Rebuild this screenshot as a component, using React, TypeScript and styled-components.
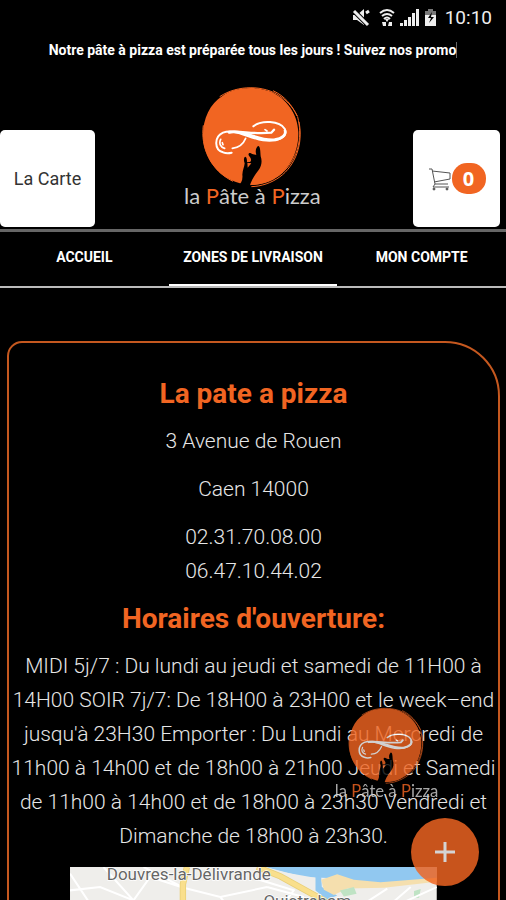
import React from "react";
import styled, { createGlobalStyle } from "styled-components";

const ORANGE = "#f16522";

const GlobalStyle = createGlobalStyle`
  *, *::before, *::after { box-sizing: border-box; }
  body {
    margin: 0;
    background: #000;
    color: #e6e6e6;
    font-family: Roboto, "Liberation Sans", sans-serif;
  }
  h2, p, nav { margin: 0; }
  button { font: inherit; border: 0; cursor: pointer; }
`;

const Screen = styled.div`
  display: flex;
  flex-direction: column;
  height: 100vh;
  overflow: hidden;
  background: #000;
`;

const StatusBar = styled.div`
  display: flex;
  align-items: center;
  justify-content: flex-end;
  gap: 4px;
  height: 36px;
  padding-right: 14px;
  color: #eee;
`;

const Clock = styled.time`
  font-size: 19px;
  line-height: 36px;
`;

const Ticker = styled.p`
  padding: 4px 0;
  text-align: center;
  font-size: 14px;
  font-weight: 700;
  line-height: 20px;
  color: #fff;
`;

const TickerText = styled.span`
  border-right: 1px solid #666;
`;

const Header = styled.header`
  display: grid;
  grid-template-columns: 1fr auto 1fr;
  align-items: end;
  padding-top: 18px;
`;

const HeaderButton = styled.button<{ $end?: boolean }>`
  display: flex;
  align-items: center;
  justify-content: center;
  justify-self: ${(p) => (p.$end ? "end" : "start")};
  width: ${(p) => (p.$end ? 87 : 95)}px;
  height: 97px;
  margin: 0 ${(p) => (p.$end ? 6 : 0)}px 2px 0;
  padding: 0;
  border-radius: 5px;
  background: #fff;
  color: #333;
  font-size: 18px;
`;

const Badge = styled.span`
  width: 34px;
  border-radius: 15px;
  background: ${ORANGE};
  color: #fff;
  font-family: "Open Sans", sans-serif;
  font-size: 20px;
  font-weight: 700;
  line-height: 31px;
  text-align: center;
`;

const LogoBox = styled.div`
  display: flex;
  width: 140px;
  margin-bottom: 17px;
`;

const Tabs = styled.nav`
  display: grid;
  grid-template-columns: repeat(3, 1fr);
  border-top: 3px solid #666;
  border-bottom: 2px solid #bbb;
`;

const Tab = styled.a<{ $active?: boolean }>`
  height: 54px;
  padding-top: 3px;
  border-bottom: 2px solid ${(p) => (p.$active ? "#fff" : "transparent")};
  color: #fff;
  font-size: 14px;
  font-weight: 700;
  line-height: 45px;
  text-align: center;
  text-decoration: none;
`;

const Content = styled.main`
  flex: 1;
  min-height: 0;
  overflow-y: auto;
  scrollbar-width: none;
  padding: 53px 6px 24px 7px;
`;

const Card = styled.section`
  display: flex;
  flex-direction: column;
  align-items: center;
  gap: 14px;
  padding: 34px 0 40px;
  border: 2px solid #c5581f;
  border-radius: 15px 55px 15px 15px;
  text-align: center;
`;

const Title = styled.h2`
  color: ${ORANGE};
  font-size: 28px;
  font-weight: 700;
  line-height: 33px;
`;

const Line = styled.p`
  font-size: 21px;
  font-weight: 300;
  line-height: 34px;
`;

const MapFrame = styled.figure`
  width: 75%;
  margin: 0;
`;

const FloatingLogo = styled.div`
  position: fixed;
  right: 66px;
  bottom: 94px;
  width: 106px;
  opacity: 0.82;
  pointer-events: none;
`;

const AddButton = styled.button`
  position: fixed;
  right: 27px;
  bottom: 14px;
  display: flex;
  align-items: center;
  justify-content: center;
  width: 68px;
  height: 68px;
  padding: 0;
  border-radius: 50%;
  background: ${ORANGE};
  color: #fff;
  opacity: 0.83;
`;

function Logo() {
  return (
    <svg viewBox="40 20 420 390" width="100%" role="img" aria-label="la Pâte à Pizza">
      <path d="M100 185C98 135 120 85 158 62C190 38 250 30 300 48C350 68 384 115 386 170C388 230 358 290 300 318C240 345 165 320 130 270C112 245 101 215 100 185Z" fill={ORANGE} />
      <g fill="none" stroke={ORANGE} strokeWidth="3">
        <path d="M150 64C205 27 285 30 330 62C358 80 374 104 384 124" />
        <path d="M310 46C345 62 368 90 382 122" />
        <path d="M388 140C401 205 378 270 330 305C305 323 275 333 245 334" />
        <path d="M384 125C398 180 388 235 352 278C322 314 280 326 240 328" />
        <path d="M101 150C92 215 122 285 190 318" />
      </g>
      <g fill="none" stroke="#fff" strokeLinecap="round">
        <path d="M251 153C275 133 330 136 345 160C356 185 325 201 280 195C235 188 195 158 160 172C132 185 134 224 160 231C168 234 178 234 186 232" strokeWidth="6" />
        <path d="M178 171C225 162 265 198 315 193C338 190 350 178 346 166" strokeWidth="8" />
        <path d="M178 170C215 165 245 178 305 172L313 163" strokeWidth="7" />
        <path d="M228 189C220 208 207 217 188 219" strokeWidth="5" />
        <path d="M153 192C147 205 153 216 165 219M158 202L160 208M286 163L292 167" strokeWidth="5" />
      </g>
      <path d="M265 212C272 211 272 229 273 243C278 256 276 271 267 284C255 300 246 312 239 336L203 334C215 325 220 313 218 298C219 284 224 275 225 264C221 254 223 245 227 244C232 246 232 254 232 260L240 260C247 256 244 249 239 243C234 237 237 232 242 233C249 236 254 239 260 238C256 229 259 216 265 212Z" fill="#000" />
      <path d="M233 262L245 264L234 277Z" fill={ORANGE} />
      <text x="43" y="387" fontFamily="Lato, sans-serif" fontSize="66" fill="#ccc">
        la <tspan fill={ORANGE}>P</tspan>âte à <tspan fill={ORANGE}>P</tspan>izza
      </text>
    </svg>
  );
}

function StatusIcons() {
  return (
    <svg width="67" height="20" viewBox="0 0 67 20" fill="#eee" aria-hidden="true">
      <path d="M1 7H5L12 1V17L5 12H1Z" />
      <path d="M1 2L17 18" stroke="#000" strokeWidth="5" />
      <path d="M2 3L16 17M14 5L17 3" stroke="#eee" strokeWidth="3" />
      <g fill="none" stroke="#eee" strokeWidth="2">
        <path d="M28 5Q35 -1 42 5M30 8Q35 4 40 8M32 11Q35 8 38 11" />
      </g>
      <path d="M33 11H37L35 14ZM30 14H34V18H31ZM37 14H40V18H36Z" />
      <path d="M48 18V15H51V18ZM52 18V12H55V18ZM56 18V9H59V18ZM60 18V5H63V18ZM64 18V1H67V18Z" />
    </svg>
  );
}

function Battery() {
  return (
    <svg width="18" height="20" viewBox="-1 0 18 20" aria-hidden="true">
      <path d="M4 1H9V3H12V7H1V3H4Z" fill="#777" />
      <path d="M1 7H12V18H1Z" fill="#eee" />
      <path d="M8 4L4 10H7L5 15L10 9H7Z" fill="#000" />
    </svg>
  );
}

function CartIcon() {
  return (
    <svg width="24" height="24" viewBox="0 0 24 24" fill="none" stroke="#555" strokeWidth="1" aria-hidden="true">
      <path d="M1 2H4L7 17H20M4 4L22 6V12L6 15M7 17L5 20H21" />
      <circle cx="6" cy="22" r="1" fill="#555" />
      <circle cx="19" cy="22" r="1" fill="#555" />
    </svg>
  );
}

function AreaMap() {
  return (
    <svg viewBox="0 0 1098 660" width="100%" role="img" aria-label="Carte de la zone de livraison">
      <rect width="1098" height="660" fill="#efeeeb" />
      <path d="M585 0H1098V36L930 60L790 34L700 30Z" fill="#91c8f0" />
      <path d="M585 0L640 16L750 35L750 110H560V0Z" fill="#efeeeb" />
      <path d="M735 24L752 30L754 60L800 85L770 98L735 70Z" fill="#91c8f0" />
      <path d="M752 38L800 22L850 38L930 46L1098 32V44L940 62L830 64L790 84L760 68Z" fill="#f5dfae" />
      <path d="M808 70L850 60L858 80L820 88ZM1030 72L1050 66L1045 92H1030Z" fill="#bfe3c4" />
      <g fill="none" stroke="#fff" strokeWidth="6">
        <path d="M0 70L90 60L190 100L240 30L340 62L450 90L590 60M100 0L190 100L150 150M220 0L340 62M0 20L60 110M450 90L500 150M590 60L700 90M880 110L950 65M950 120L1020 60M1000 105L1098 60M640 110L670 70L540 30" />
      </g>
      <path d="M350 0L338 52L338 150L390 330L440 660M560 0L630 28L760 100L900 280" fill="none" stroke="#e9cf78" strokeWidth="19" />
      <path d="M350 0L338 52L338 150L390 330L440 660M560 0L630 28L760 100L900 280" fill="none" stroke="#f9df8c" strokeWidth="14" />
      <g fontFamily="Roboto, sans-serif" fill="#666" stroke="#fff" strokeWidth="4" paintOrder="stroke">
        <text x="110" y="40" fontSize="51">Douvres-la-Délivrande</text>
        <text x="579" y="120" fontSize="51">Ouistreham</text>
      </g>
    </svg>
  );
}

export default function App() {
  return (
    <Screen>
      <GlobalStyle />
      <StatusBar>
        <StatusIcons />
        <Battery />
        <Clock>10:10</Clock>
      </StatusBar>
      <Ticker>
        <TickerText>Notre pâte à pizza est préparée tous les jours ! Suivez nos promo</TickerText>
      </Ticker>
      <Header>
        <HeaderButton type="button">La Carte</HeaderButton>
        <LogoBox>
          <Logo />
        </LogoBox>
        <HeaderButton type="button" $end aria-label="Panier">
          <CartIcon />
          <Badge>0</Badge>
        </HeaderButton>
      </Header>
      <Tabs>
        <Tab href="#accueil">ACCUEIL</Tab>
        <Tab href="#zones" $active aria-current="page">ZONES DE LIVRAISON</Tab>
        <Tab href="#compte">MON COMPTE</Tab>
      </Tabs>
      <Content>
        <Card>
          <Title>La pate a pizza</Title>
          <Line>3 Avenue de Rouen</Line>
          <Line>Caen 14000</Line>
          <Line>
            02.31.70.08.00
            <br />
            06.47.10.44.02
          </Line>
          <Title>Horaires d'ouverture:</Title>
          <Line>
            MIDI 5j/7 : Du lundi au jeudi et samedi de 11H00 à 14H00 SOIR 7j/7: De 18H00 à 23H00 et le week–end
            jusqu'à 23H30 Emporter : Du Lundi au Mercredi de 11h00 à 14h00 et de 18h00 à 21h00 Jeudi et Samedi
            de 11h00 à 14h00 et de 18h00 à 23h30 Vendredi et Dimanche de 18h00 à 23h30.
          </Line>
          <MapFrame>
            <AreaMap />
          </MapFrame>
        </Card>
      </Content>
      <FloatingLogo>
        <Logo />
      </FloatingLogo>
      <AddButton type="button" aria-label="Ajouter">
        <svg width="20" height="20" viewBox="0 0 20 20" stroke="#fff" strokeWidth="3" aria-hidden="true">
          <path d="M10 0V20M0 10H20" />
        </svg>
      </AddButton>
    </Screen>
  );
}
